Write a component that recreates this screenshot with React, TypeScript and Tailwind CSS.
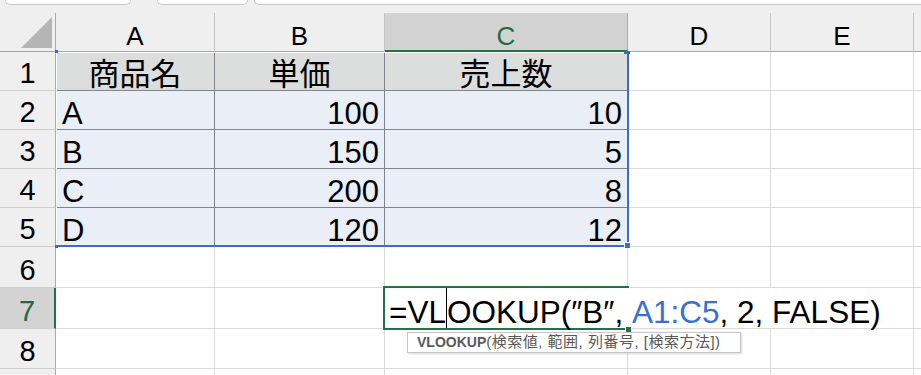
import React from "react";

const COLS = [
  { name: "A", w: "w-[159px]" },
  { name: "B", w: "w-[170px]" },
  { name: "C", w: "w-[243px]" },
  { name: "D", w: "w-[143px]" },
  { name: "E", w: "w-[143px]" },
];

const ROWS = [
  { n: 1, h: "h-[39px]" },
  { n: 2, h: "h-[39px]" },
  { n: 3, h: "h-[39px]" },
  { n: 4, h: "h-[39px]" },
  { n: 5, h: "h-[39px]" },
  { n: 6, h: "h-[41px]" },
  { n: 7, h: "h-[41px]" },
  { n: 8, h: "h-[40px]" },
  { n: 9, h: "h-[40px]" },
];

const DATA = [
  ["商品名", "単価", "売上数"],
  ["A", "100", "10"],
  ["B", "150", "5"],
  ["C", "200", "8"],
  ["D", "120", "12"],
];

const Cell = ({ row, col, w }: { row: number; col: number; w: string }) => {
  const inTable = row <= 5 && col < 3;
  if (!inTable) {
    return (
      <div
        className={`${w} h-full shrink-0 border-r border-b border-[#dadada] bg-white`}
      />
    );
  }
  const value = DATA[row - 1][col];
  if (row === 1) {
    return (
      <div
        className={`${w} h-full shrink-0 flex items-end justify-center border-r border-b border-[#80838a] bg-[#dcdedd] text-[31px] leading-none text-black`}
      >
        {value}
      </div>
    );
  }
  return (
    <div
      className={`${w} h-full shrink-0 flex items-end border-r border-b border-[#80838a] bg-[#e9eef7] text-[31px] leading-none text-black ${
        col === 0 ? "justify-start pl-[6px]" : "justify-end pr-[5px]"
      }`}
    >
      {value}
    </div>
  );
};

// row 9 is only a sliver at the bottom, its number is not visible
const RowHeader = ({ n }: { n: number }) =>
  n === 7 ? (
    <div className="w-[56px] h-full shrink-0 flex items-end justify-center pb-[2px] bg-[#d3d3d3] border-r-2 border-r-[#217346] border-b border-b-[#cfcfcf] text-[29px] leading-none text-[#1e6b3f]">
      {n}
    </div>
  ) : (
    <div className="w-[56px] h-full shrink-0 flex items-end justify-center pb-[2px] bg-[#efefef] border-r border-r-[#ababab] border-b border-b-[#cfcfcf] text-[29px] leading-none text-black">
      {n < 9 ? n : null}
    </div>
  );

const ColumnHeaders = () => (
  <div className="flex h-[39px]">
    <div className="w-[56px] shrink-0 flex items-end justify-end pr-[3px] pb-[3px] border-r border-r-[#ababab] border-b border-b-[#a8a8a8]">
      <svg width="31" height="31" viewBox="0 0 31 31">
        <polygon points="31,0 31,31 0,31" fill="#b4b4b4" />
      </svg>
    </div>
    {COLS.map((c) =>
      c.name === "C" ? (
        <div
          key={c.name}
          className={`${c.w} shrink-0 flex items-end justify-center pb-px bg-[#d2d2d2] border-r border-r-[#ababab] border-b-2 border-b-[#217346] text-[26px] leading-none text-[#1e6b3f]`}
        >
          {c.name}
        </div>
      ) : (
        <div
          key={c.name}
          className={`${c.w} shrink-0 flex items-end justify-center pb-[2px] border-r border-r-[#c4c4c4] border-b border-b-[#a8a8a8] text-[26px] leading-none text-black`}
        >
          {c.name}
        </div>
      )
    )}
    <div className="flex-1 border-b border-b-[#a8a8a8]" />
  </div>
);

const App = () => {
  return (
    <div className="relative w-[921px] h-[375px] overflow-hidden bg-white font-['Liberation_Sans','Noto_Sans_CJK_JP',sans-serif]">
      {/* header band with sheet-ish tabs */}
      <div className="bg-[#efefef]">
        <div className="flex h-[5px]">
          <div className="ml-[5px] w-[126px] bg-white border-x border-b border-[#c8c8c8] rounded-b-[5px]" />
          <div className="ml-[26px] w-[91px] bg-white border-x border-b border-[#c8c8c8] rounded-b-[5px]" />
          <div className="ml-[6px] flex-1 bg-white border-l border-b border-[#c8c8c8] rounded-bl-[5px]" />
        </div>
        <div className="h-[8px]" />
        <ColumnHeaders />
      </div>

      {ROWS.map((r) => (
        <div key={r.n} className={`flex ${r.h}`}>
          <RowHeader n={r.n} />
          {COLS.map((c, ci) => (
            <Cell key={c.name} row={r.n} col={ci} w={c.w} />
          ))}
          <div className="flex-1 h-full border-b border-[#dadada]" />
        </div>
      ))}

      {/* range highlight A1:C5 */}
      <div className="absolute left-[56px] top-[52px] w-[573px] h-[195px] border-l border-t border-l-white border-t-white border-r-2 border-b-2 border-r-[#3a6cc9] border-b-[#3a6cc9]" />
      <div className="absolute left-[55px] top-[50px] w-[3px] h-[3px] bg-[#3a6cc9]" />
      <div className="absolute left-[624px] top-[51px] w-[6px] h-[3px] bg-[#3a6cc9]" />
      <div className="absolute left-[55px] top-[245px] w-[3px] h-[3px] bg-[#3a6cc9]" />
      <div className="absolute left-[624px] top-[242px] w-[7px] h-[7px] border border-white bg-[#3a6cc9]" />

      {/* active cell C7 in edit mode */}
      <div className="absolute left-[383px] top-[286px] w-[246px] h-[44px] border-2 border-[#217346]" />
      <div className="absolute left-[385px] top-[288px] h-[40px] flex items-end bg-white pl-[4px] pr-[4px] text-[31.5px] leading-none text-black whitespace-pre">
        <span>=VL</span>
        <span className="self-stretch w-px bg-black" />
        <span>{"OOKUP(″B″,\u00a0"}</span>
        <span className="text-[#3a6fd4]">A1:C5</span>
        <span>, 2, FALSE)</span>
      </div>
      <div className="absolute left-[625px] top-[326px] w-[7px] h-[7px] border border-white bg-[#217346]" />

      {/* function tooltip */}
      <div className="absolute left-[407px] top-[332px] w-[334px] h-[21px] flex items-center pl-[9px] bg-white border border-[#c6c6c6] shadow-[1px_1px_2px_rgba(0,0,0,0.15)] text-[#595959] whitespace-nowrap">
        <span className="text-[14px] font-bold">VLOOKUP</span>
        <span className="text-[15px] tracking-[0.5px]">(検索値, 範囲, 列番号, [検索方法])</span>
      </div>
    </div>
  );
};

export default App;
